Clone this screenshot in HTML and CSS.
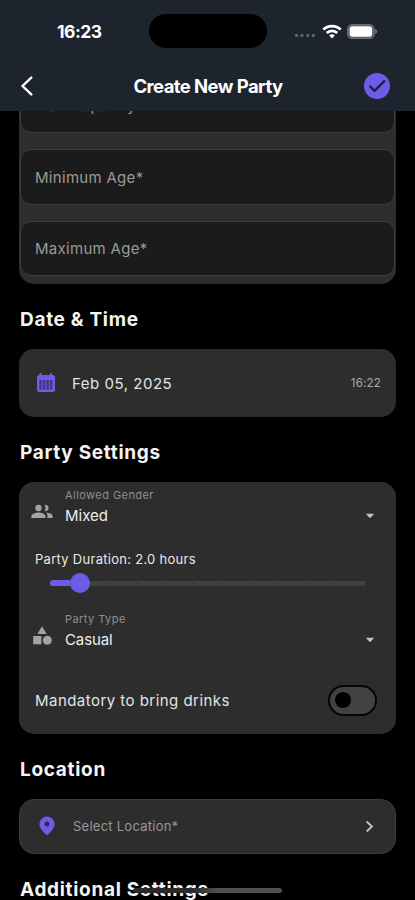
FILE: index.html
```html
<!DOCTYPE html>
<html lang="en">
<head>
<meta charset="utf-8">
<title>Create New Party</title>
<link rel="stylesheet" href="styles.css">
</head>
<body>
<div class="phone">
  <header class="header">
    <div class="status">
      <span class="clock">16:23</span>
      <span class="island"></span>
      <span class="signals">
        <svg class="dots" width="22" height="5" viewBox="0 0 22 5" fill="#59616b"><circle cx="2.4" cy="2.5" r="1.7"/><circle cx="8" cy="2.5" r="1.7"/><circle cx="13.7" cy="2.5" r="1.7"/><circle cx="19.4" cy="2.5" r="1.7"/></svg>
        <svg class="wifi" width="20" height="15" viewBox="0 0 20 15" fill="none" stroke="#fff" stroke-width="2.8"><path d="M1.3 5.6a12.4 12.4 0 0 1 17.4 0"/><path d="M4.7 9.1a7.5 7.5 0 0 1 10.6 0"/><path d="M10 14.4 7.2 11.5a4 4 0 0 1 5.6 0z" fill="#fff" stroke="none"/></svg>
        <svg class="battery" width="31" height="15" viewBox="0 0 31 15"><rect x=".7" y=".7" width="26.4" height="13.6" rx="4.5" fill="#50565e" stroke="#6a7077" stroke-width="1.4"/><rect x="2.6" y="2.3" width="22.6" height="10.4" rx="3" fill="#fff"/><path d="M28.4 5v5c2-.8 2-4.200 0-5z" fill="#8b9096"/></svg>
      </span>
    </div>
    <div class="titlebar">
      <svg class="back" width="14" height="20" viewBox="0 0 14 20" fill="none" stroke="#fff" stroke-width="2.4" stroke-linecap="round" stroke-linejoin="round"><path d="M11.300 1.600 2.500 10l8.800 8.400"/></svg>
      <h1>Create New Party</h1>
      <svg class="done" width="26" height="26" viewBox="0 0 26 26"><circle cx="13" cy="13" r="13" fill="#6c5ce7"/><path d="m5.500 12.800 5 5L20.800 7.600" fill="none" stroke="#1b222c" stroke-width="2.3"/></svg>
    </div>
  </header>

  <main class="content">
    <section class="card fields">
      <div class="field"><span>Max Capacity*</span></div>
      <div class="field"><span>Minimum Age*</span></div>
      <div class="field"><span>Maximum Age*</span></div>
    </section>

    <h2>Date &amp; Time</h2>
    <section class="card date">
      <svg width="20" height="22" viewBox="0 0 20 22"><path d="M3.500 1h2v2h8.500V1h2v2h.5a2.500 2.500 0 0 1 2.500 2.500v12a2.500 2.500 0 0 1-2.500 2.500h-13A2.500 2.500 0 0 1 1 17.500v-12A2.500 2.500 0 0 1 3.500 3z" fill="#6c5ce7"/><rect x="3.300" y="8" width="13.200" height="9.500" rx="1" fill="#403785"/><path d="M6.300 8v9M9.900 8v9M13.500 8v9" stroke="#6c5ce7" stroke-width="1"/><path d="M3.300 12.700h13" stroke="#5648b4" stroke-width=".8"/></svg>
      <span class="day">Feb 05, 2025</span>
      <span class="time">16:22</span>
    </section>

    <h2>Party Settings</h2>
    <section class="card settings">
      <div class="select">
        <svg width="24" height="24" viewBox="0 0 24 24" fill="#a3a3a3"><circle cx="8.500" cy="8" r="3.200"/><path d="M1.400 18v-2c0-2.400 4.600-3.600 7.100-3.600s7 1.200 7 3.600v2z"/><path d="M14.600 4.900a3.200 3.200 0 1 1 0 6.200c1.100-1.700 1.100-4.500 0-6.200z"/><path d="M16.300 12.500c2.600.3 6.300 1.400 6.300 3.500v2h-5.200v-2c0-1.500-.4-2.600-1.100-3.500z"/></svg>
        <div class="pair"><span class="label">Allowed Gender</span><span class="value">Mixed</span></div>
        <svg class="caret" width="10" height="6" viewBox="0 0 10 6"><path d="M.8.8h8.400L5 5.200z" fill="#c4c4c4"/></svg>
      </div>
      <p class="duration">Party Duration: 2.0 hours</p>
      <div class="slider">
        <div class="done-track"></div>
        <div class="thumb"></div>
        <div class="ticks"><i></i><i></i><i></i><i></i><i></i><i></i><i></i><i></i><i></i></div>
      </div>
      <div class="select type">
        <svg width="24" height="24" viewBox="0 0 24 24" fill="#a3a3a3"><path d="M12 2.200 16.600 10H7.400z"/><rect x="3.200" y="12" width="8.200" height="8.300"/><circle cx="17.300" cy="16.200" r="4.500"/></svg>
        <div class="pair"><span class="label">Party Type</span><span class="value casual">Casual</span></div>
        <svg class="caret" width="10" height="6" viewBox="0 0 10 6"><path d="M.8.8h8.400L5 5.200z" fill="#c4c4c4"/></svg>
      </div>
      <div class="toggle-row">
        <span>Mandatory to bring drinks</span>
        <div class="switch"><div class="knob"></div></div>
      </div>
    </section>

    <h2>Location</h2>
    <section class="card location">
      <svg width="16" height="20" viewBox="0 0 16 20"><path d="M8 .4a7.600 7.600 0 0 0-7.600 7.600C.4 12.400 4.800 16.400 8 19.400c3.200-3 7.600-7 7.600-11.400A7.600 7.600 0 0 0 8 .4z" fill="#6c5ce7"/><circle cx="8" cy="8" r="2.500" fill="#302a55"/></svg>
      <span class="place">Select Location*</span>
      <svg width="9" height="13" viewBox="0 0 9 13" fill="none" stroke="#c2c2c2" stroke-width="1.900"><path d="m1.700 1.500 5.200 5-5.200 5"/></svg>
    </section>

    <h2>Additional Settings</h2>
  </main>
  <div class="home"></div>
</div>
</body>
</html>
```

FILE: styles.css
```css
* { box-sizing: border-box; }
body { margin: 0; background: #000; font-family: Inter, sans-serif; color: #e4e4e4; }
svg { display: block; flex: none; }
.phone { position: relative; width: 415px; height: 900px; overflow: hidden; background: #000; display: flex; flex-direction: column; }

.header { height: 111px; flex: none; background: #1d242d; position: relative; z-index: 1; }
.status { display: flex; align-items: center; height: 62px; padding-left: 57px; }
.clock { width: 92px; font-size: 17.5px; font-weight: 700; color: #fff; letter-spacing: -0.5px; }
.island { width: 118px; height: 34px; border-radius: 17px; background: #000; }
.signals { display: flex; align-items: center; margin-left: 27px; }
.dots { margin-top: 9px; }
.wifi { margin-left: 6px; }
.battery { margin-left: 5px; }
.titlebar { display: flex; align-items: center; height: 48px; padding: 0 25px 0 20px; }
h1 { flex: 1; margin: 0; padding-left: 18px; text-align: center; font-size: 18.5px; font-weight: 700; letter-spacing: -0.58px; color: #fff; }

.content { flex: 1; min-height: 0; overflow: hidden; padding: 0 19px; }
.card { background: #2d2d2d; border-radius: 15px; }
.fields { height: 206px; margin-top: -33.5px; margin-bottom: 0; padding: 0 1px; display: flex; flex-direction: column; gap: 16px; }
.field { height: 55.5px; flex: none; border: 1px solid #3c3c3c; border-radius: 11px; background: #1b1b1b; display: flex; align-items: center; padding: 1px 0 0 14px; font-size: 15px; letter-spacing: 0.3px; color: #9a9a9a; }

h2 { margin: 0; height: 65px; padding: 7px 0 0 1px; display: flex; align-items: center; font-size: 19px; font-weight: 700; letter-spacing: 0.69px; color: #f4f4f4; white-space: nowrap; }

.date { height: 68px; display: flex; align-items: center; padding: 1px 15px 0 17px; }
.day { flex: 1; margin-left: 16px; font-size: 15px; letter-spacing: 0.52px; }
.time { font-size: 11.5px; letter-spacing: 0.2px; color: #aaa; }

.settings { height: 252px; padding: 7px 16px 0 11px; }
.select { display: flex; height: 36px; }
.select > svg:first-child { margin-top: 11px; }
.pair { flex: 1; margin-left: 11px; display: flex; flex-direction: column; }
.label { font-size: 11px; line-height: 13px; letter-spacing: 0.44px; color: #8f8f8f; }
.value { font-size: 15px; line-height: 20px; margin-top: 4px; color: #ededed; }
.casual { letter-spacing: -0.1px; }
.caret { margin: 24px 5px 0 0; }
.duration { margin: 26px 0 0 5px; font-size: 13px; line-height: 16px; letter-spacing: 0.28px; color: #e8e8e8; }
.slider { display: flex; align-items: center; height: 20px; margin: 6.500px 15px 0 20px; background: linear-gradient(#414141, #414141) center / 100% 5px no-repeat; border-radius: 3px; }
.done-track { width: 20px; height: 6px; border-radius: 3px 0 0 3px; background: #6c5ce7; }
.thumb { width: 20px; height: 20px; border-radius: 50%; background: #6c5ce7; }
.ticks { flex: 1; display: flex; justify-content: space-between; padding: 0 30px 0 18px; }
.ticks i { width: 2px; height: 1px; background: #303030; }
.type { margin-top: 19.500px; }
.toggle-row { display: flex; align-items: center; justify-content: space-between; margin: 34.500px 3px 0 5px; height: 34px; font-size: 15px; letter-spacing: 0.46px; }
.switch { width: 49px; height: 31px; border: 2px solid #050505; border-radius: 16px; background: #424242; display: flex; align-items: center; padding-left: 5px; }
.knob { width: 16px; height: 16px; border-radius: 50%; background: #000; }

.location { height: 55px; border: 1px solid #3b3b3b; display: flex; align-items: center; padding: 0 21px 0 19px; }
.place { flex: 1; margin-left: 18px; font-size: 13px; letter-spacing: 0.25px; color: #989898; }
.home { position: absolute; left: 133px; top: 888px; width: 149px; height: 5px; border-radius: 3px; background: linear-gradient(90deg, #2a2a2a 40%, #505050 56%); z-index: 2; }
```
